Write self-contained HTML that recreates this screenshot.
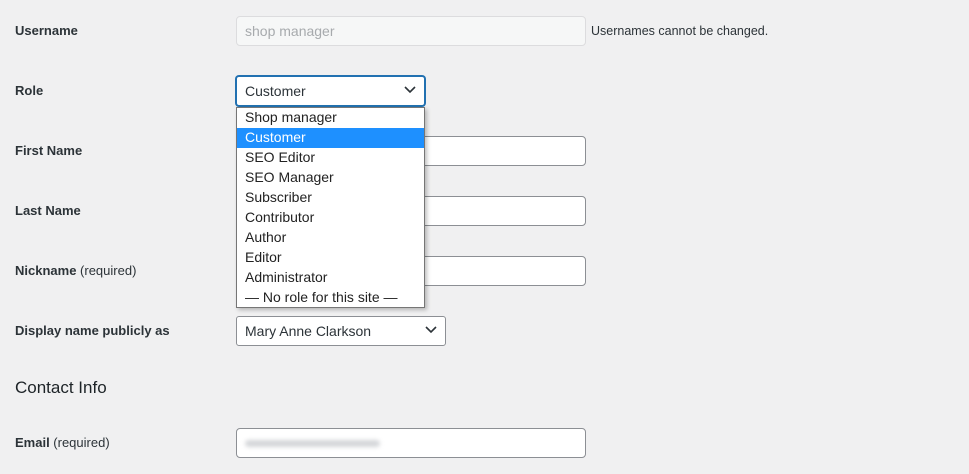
<!DOCTYPE html>
<html><head><style>
body{margin:0;width:969px;height:474px;background:#f0f0f1;font-family:"Liberation Sans",sans-serif;color:#1d2327;position:relative;overflow:hidden}
.l{position:absolute;left:15px;font-size:13px;font-weight:bold;line-height:16px;color:#2c3338}
.l span{font-weight:normal}
.i{position:absolute;left:236px;width:348px;height:28px;background:#fff;border:1px solid #8c8f94;border-radius:4px}
.s{position:absolute;left:236px;height:28px;background:#fff;border:1px solid #8c8f94;border-radius:3px;font-size:14px;line-height:28px;padding-left:8px;box-sizing:content-box;color:#2c3338}
.s svg{position:absolute;right:8px;top:9px}
.dd{position:absolute;left:236px;top:107px;width:187px;height:199px;background:#fff;border:1px solid #767676;box-shadow:2px 2px 4px rgba(0,0,0,.25);font-size:14px;color:#222}
.dd div{height:20px;line-height:19px;padding-left:8px}
.dd .h{background:#1e90ff;color:#fff}
</style></head><body>
<div class="l" style="top:23px">Username</div>
<div class="i" style="top:16px;background:#f6f7f7;border-color:#dcdcde;color:#a7aaad;font-size:14px;line-height:28px;padding-left:8px;width:340px">shop manager</div>
<div style="position:absolute;left:591px;top:24px;font-size:12.5px;color:#2c3338">Usernames cannot be changed.</div>
<div class="l" style="top:83px">Role</div>
<div class="s" style="top:76px;width:179px;border-color:#2271b1;box-shadow:0 0 0 1px #2271b1">Customer<svg width="12" height="8" viewBox="0 0 12 8"><path d="M1 1l5 5 5-5" fill="none" stroke="#2c3338" stroke-width="1.6"/></svg></div>
<div class="l" style="top:143px">First Name</div>
<div class="i" style="top:136px"></div>
<div class="l" style="top:203px">Last Name</div>
<div class="i" style="top:196px"></div>
<div class="l" style="top:263px">Nickname <span>(required)</span></div>
<div class="i" style="top:256px"></div>
<div class="dd"><div>Shop manager</div><div class="h">Customer</div><div>SEO Editor</div><div>SEO Manager</div><div>Subscriber</div><div>Contributor</div><div>Author</div><div>Editor</div><div>Administrator</div><div>— No role for this site —</div></div>
<div class="l" style="top:323px">Display name publicly as</div>
<div class="s" style="top:316px;width:200px">Mary Anne Clarkson<svg width="12" height="8" viewBox="0 0 12 8"><path d="M1 1l5 5 5-5" fill="none" stroke="#2c3338" stroke-width="1.6"/></svg></div>
<div style="position:absolute;left:15px;top:378px;font-size:17px;color:#1d2327">Contact Info</div>
<div class="l" style="top:435px">Email <span>(required)</span></div>
<div class="i" style="top:428px"><div style="position:absolute;left:8px;top:11px;width:135px;height:7px;background:#d4d6d9;border-radius:4px;filter:blur(2px)"></div></div>
</body></html>
